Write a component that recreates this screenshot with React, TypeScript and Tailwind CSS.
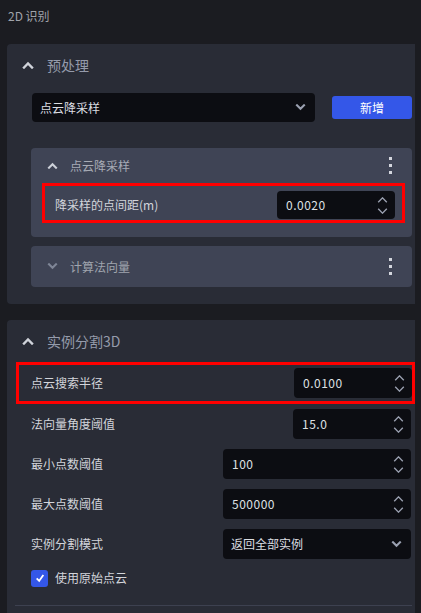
const FONT = { fontFamily: '"Noto Sans CJK SC", "Noto Sans", "Liberation Sans", sans-serif' };

function Chevron({ dir, className }: { dir: "up" | "down"; className?: string }) {
  return (
    <svg viewBox="0 0 12 8" className={className} fill="none" stroke="currentColor" strokeWidth={2.4} strokeLinecap="square">
      {dir === "up" ? <path d="M2 6.5 L6 2.5 L10 6.5" /> : <path d="M2 1.5 L6 5.5 L10 1.5" />}
    </svg>
  );
}

function Kebab() {
  return (
    <div className="flex flex-col gap-[4px]">
      <span className="block w-[3px] h-[3px] bg-[#d3d6dd]" />
      <span className="block w-[3px] h-[3px] bg-[#d3d6dd]" />
      <span className="block w-[3px] h-[3px] bg-[#d3d6dd]" />
    </div>
  );
}

function Spinner() {
  return (
    <div className="flex flex-col items-center gap-[5px] text-[#9ba1b1]">
      <svg viewBox="0 0 12 7" className="w-[11px] h-[6px]" fill="none" stroke="currentColor" strokeWidth={1.6}>
        <path d="M1 6 L6 1 L11 6" />
      </svg>
      <svg viewBox="0 0 12 7" className="w-[11px] h-[6px]" fill="none" stroke="currentColor" strokeWidth={1.6}>
        <path d="M1 1 L6 6 L11 1" />
      </svg>
    </div>
  );
}

function NumberInput({ value, w, h = "h-[30px]" }: { value: string; w: string; h?: string }) {
  return (
    <div className={`${w} ${h} bg-[#0c0d12] rounded-[4px] flex items-center justify-between pl-[9px] pr-[7px]`}>
      <span className="text-[12px] text-[#dfe1e5] tracking-[0.5px]">{value}</span>
      <Spinner />
    </div>
  );
}

function Select({ value, w, h }: { value: string; w: string; h: string }) {
  return (
    <div className={`${w} ${h} bg-[#0c0d12] rounded-[4px] flex items-center justify-between pl-[8px] pr-[9px]`}>
      <span className="text-[12px] text-[#dcdee3]">{value}</span>
      <Chevron dir="down" className="w-[11px] h-[7px] text-[#9ba1b1]" />
    </div>
  );
}

function Row({ label, children }: { label: string; children: React.ReactNode }) {
  return (
    <div className="h-[40px] flex items-center justify-between pl-[24px] pr-[4px]">
      <span className="text-[12px] text-[#d3d5db]">{label}</span>
      {children}
    </div>
  );
}

export default function App() {
  return (
    <div className="w-[421px] h-[613px] bg-[#1b1c21] overflow-hidden flex" style={FONT}>
      <div className="w-[415px] flex flex-col">
        {/* Title */}
        <div className="h-[44px] pl-[8px] pt-[8px] text-[12px] leading-[16px] text-[#a0a3aa]">2D 识别</div>

        {/* 预处理 */}
        <div className="ml-[7px] w-[408px] bg-[#292c36] rounded-l-[4px] pb-[17px]">
          <div className="h-[42px] flex items-center pl-[15px]">
            <Chevron dir="up" className="w-[12px] h-[8px] text-[#d0d3da]" />
            <span className="ml-[13px] text-[14px] text-[#959bab]">预处理</span>
          </div>
          <div className="mt-[7px] flex items-center pl-[25px]">
            <Select value="点云降采样" w="w-[283px]" h="h-[29px]" />
            <button className="ml-[17px] w-[80px] h-[23px] rounded-[3px] bg-[#3457e8] text-white text-[12px] flex items-center justify-center">
              新增
            </button>
          </div>

          <div className="mt-[26px] pl-[24px] pr-[3px] flex flex-col gap-[9px]">
            <div className="rounded-[4px] bg-[#3f4455] pb-[14px]">
              <div className="h-[35px] flex items-center pl-[16px] pr-[20px]">
                <Chevron dir="up" className="w-[11px] h-[7px] text-[#cdd1d9]" />
                <span className="ml-[12px] text-[12px] text-[#a7abb5] flex-1">点云降采样</span>
                <Kebab />
              </div>
              <div className="ml-[11px] mr-[7px] h-[40px] border-[3px] border-[#ff0000] flex items-start justify-between pt-[5px] pl-[10px] pr-[7px]">
                <span className="text-[12px] text-[#d3d5db] leading-[28px]">降采样的点间距(m)</span>
                <NumberInput value="0.0020" w="w-[118px]" h="h-[28px]" />
              </div>
            </div>
            <div className="rounded-[4px] bg-[#3f4455] h-[41px] flex items-center pl-[16px] pr-[20px]">
              <Chevron dir="down" className="w-[11px] h-[7px] text-[#7f8697]" />
              <span className="ml-[12px] text-[12px] text-[#a0a4ae] flex-1">计算法向量</span>
              <Kebab />
            </div>
          </div>
        </div>

        {/* 实例分割3D */}
        <div className="mt-[16px] ml-[7px] w-[408px] flex-1 bg-[#292c36] rounded-tl-[4px]">
          <div className="h-[42px] flex items-center pl-[15px]">
            <Chevron dir="up" className="w-[12px] h-[8px] text-[#d0d3da]" />
            <span className="ml-[13px] text-[14px] text-[#959bab]">实例分割3D</span>
          </div>
          <div className="ml-[9px] h-[42px] border-[3px] border-[#ff0000] flex items-center justify-between pl-[12px]">
            <span className="text-[12px] text-[#d3d5db]">点云搜索半径</span>
            <NumberInput value="0.0100" w="w-[118px]" />
          </div>
          <Row label="法向量角度阈值">
            <NumberInput value="15.0" w="w-[118px]" />
          </Row>
          <Row label="最小点数阈值">
            <NumberInput value="100" w="w-[188px]" />
          </Row>
          <Row label="最大点数阈值">
            <NumberInput value="500000" w="w-[188px]" />
          </Row>
          <Row label="实例分割模式">
            <Select value="返回全部实例" w="w-[188px]" h="h-[30px]" />
          </Row>
          <div className="h-[28px] flex items-center pl-[24px]">
            <div className="w-[17px] h-[17px] rounded-[3px] bg-[#3457e8] flex items-center justify-center">
              <svg viewBox="0 0 12 12" className="w-[10px] h-[10px]" fill="none" stroke="white" strokeWidth={2.2}>
                <path d="M2 6.5 L5 9.5 L10 2.5" />
              </svg>
            </div>
            <span className="ml-[7px] text-[12px] text-[#d3d5db]">使用原始点云</span>
          </div>
          <div className="mt-[13px] ml-[8px] w-[397px] h-px bg-[#3d4150]" />
        </div>
      </div>
    </div>
  );
}
